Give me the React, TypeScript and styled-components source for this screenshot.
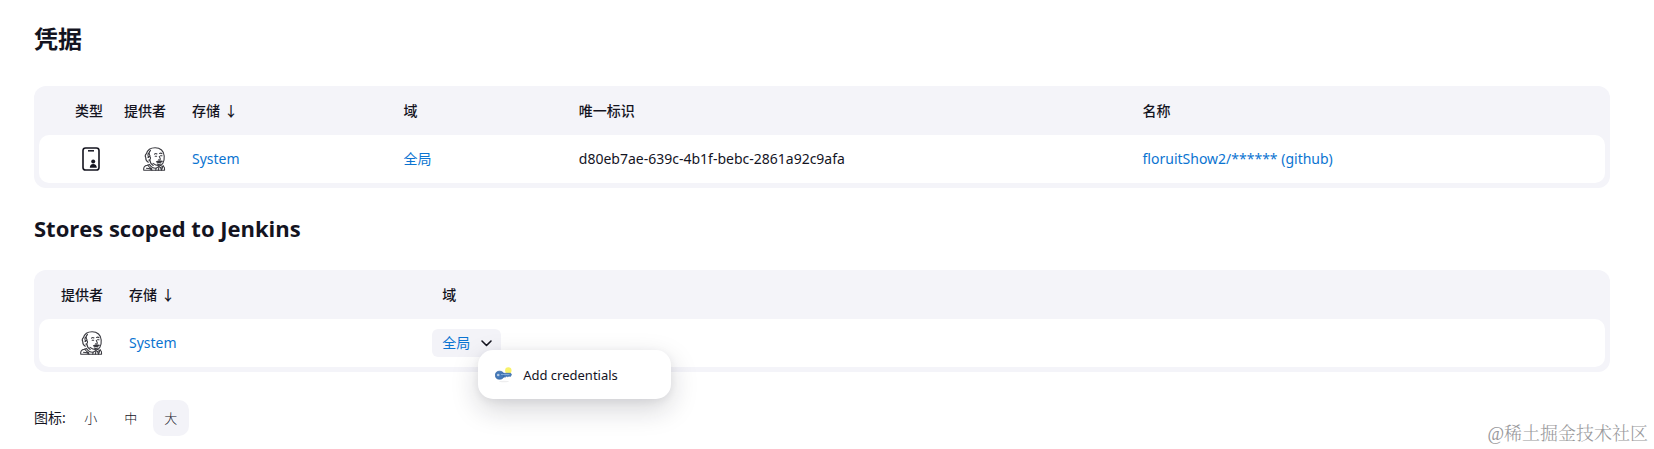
import React from "react";
import styled, { createGlobalStyle, css } from "styled-components";

const GlobalStyle = createGlobalStyle`
  *, *::before, *::after { box-sizing: border-box; }
  body {
    margin: 0;
    background: #fff;
    color: #14141f;
    font: 400 14px/20px "Noto Sans", "Noto Sans CJK SC", sans-serif;
  }
`;

const Page = styled.main`
  position: relative;
  padding: 21px 44px 13px 34px;
`;

const Title = styled.h1`
  margin: 0 0 29px;
  font-size: 24px;
  line-height: 36px;
  font-weight: 700;
`;

const SectionTitle = styled.h2`
  margin: 23px 0 25px;
  font-size: 22px;
  line-height: 34px;
  font-weight: 700;
  font-family: "Open Sans", "Noto Sans CJK SC", sans-serif;
`;

const Panel = styled.section`
  padding: 0 5px 5px;
  border-radius: 12px;
  background: #f4f4f9;
`;

const DataTable = styled.table`
  width: 100%;
  table-layout: fixed;
  border-collapse: separate;
  border-spacing: 0;
`;

const Col = styled.col<{ $width?: string }>`
  width: ${({ $width }) => $width ?? "auto"};
`;

const cell = css<{ $end?: boolean }>`
  padding: 0 12px 0 14px;
  text-align: ${({ $end }) => ($end ? "right" : "left")};
  white-space: nowrap;
`;

const HeadCell = styled.th<{ $end?: boolean }>`
  ${cell}
  padding-left: ${({ $end }) => ($end ? "0" : "14px")};
  height: 49px;
  font-weight: 500;
`;

const Cell = styled.td<{ $end?: boolean }>`
  ${cell}
  height: 48px;
  background: #fff;
  &:first-child { border-radius: 10px 0 0 10px; }
  &:last-child { border-radius: 0 10px 10px 0; }
  > svg { display: inline-block; vertical-align: middle; }
`;

const SortArrow = styled.span`
  margin-left: 4px;
`;

const Link = styled.a`
  color: #0b74d1;
  text-decoration: none;
`;

const DomainChip = styled.div`
  position: relative;
  display: inline-flex;
  align-items: center;
  gap: 8px;
  height: 28px;
  margin-left: -10px;
  padding: 0 7px 0 10px;
  border-radius: 6px;
  background: #f3f3f8;
`;

const ChevronButton = styled.button`
  display: flex;
  padding: 0;
  border: 0;
  background: none;
  color: #14141f;
`;

const Menu = styled.div`
  position: absolute;
  top: 21px;
  left: 46px;
  z-index: 1;
  width: 193px;
  padding: 5px;
  border-radius: 15px;
  background: #fff;
  box-shadow: 0 10px 28px rgba(20, 20, 40, 0.18), 0 2px 8px rgba(20, 20, 40, 0.06);
`;

const MenuItem = styled.button`
  display: flex;
  align-items: center;
  gap: 11px;
  width: 100%;
  height: 39px;
  padding: 0 12px;
  border: 0;
  background: none;
  color: #14141f;
  font: inherit;
  font-size: 13px;
`;

const SizeBar = styled.div`
  display: flex;
  align-items: center;
  gap: 4px;
  margin-top: 28px;
`;

const SizeLabel = styled.span`
  margin-right: 3px;
`;

const SizeButton = styled.button<{ $active?: boolean }>`
  width: 36px;
  height: 36px;
  padding: 0;
  border: 0;
  border-radius: 10px;
  background: ${({ $active }) => ($active ? "#f3f3f8" : "transparent")};
  color: inherit;
  font: inherit;
  font-size: 13px;
  font-weight: 300;
`;

const Watermark = styled.span`
  position: absolute;
  right: 6px;
  bottom: 2px;
  color: #98989b;
  font: 300 18px/26px "Liberation Serif", "Noto Serif CJK SC", "Noto Sans CJK SC", serif;
`;

const CredentialIcon = () => (
  <svg width="24" height="24" viewBox="0 0 24 24" fill="none" stroke="#14141f" strokeWidth="1.6">
    <rect x="4" y="1" width="16" height="22" rx="2.6" />
    <path d="M9 3.8h6" strokeWidth="1.5" />
    <circle cx="14.2" cy="14.5" r="2" fill="#14141f" stroke="none" />
    <path d="M10.800 20.800c0-2.300 1.300-3.700 3.400-3.700s3.600 1.400 3.600 3.700z" fill="#14141f" stroke="none" />
  </svg>
);

const JenkinsIcon = () => (
  <svg width="24" height="24" viewBox="0 0 24 24" fill="none" stroke="#3a3a40" strokeWidth="1.1" strokeLinecap="round" strokeLinejoin="round">
    <path d="M6.300 15.200C4.600 14.200 3.600 12.400 3.800 10.700c-.8-1.300-.5-3 .6-4C5.400 3 9 .7 13.100.7c5.200 0 8.900 3.400 9.100 8.300.2 2.700-.1 5.200-1.300 7.300-.8 1.500-2 2.400-3.600 2.400-2.200 0-4.700-.8-6.300-2.300" />
    <path d="M6.300 6.200c-.7 1.400-.5 2.900.2 4.200M8.500 3.500C6.900 4.900 7 7.200 8.100 9M6 10.300c1.100-1.200 2.900-.5 2.500 1.200-.2 1-.8 1.500-1.600 1.600M7.800 12.900c.2 2.500 1.300 4.300 3.400 5.600" />
    <path d="M12.500 7.200c.8-.8 1.600-.9 2.400-.2M17.600 6.500c.8-.6 1.700-.5 2.400.2M13.200 9.200h1.400M18.500 8.800h1.500M17.300 9.300c.2 1.600 1.700 2.500.8 3.300-.4.400-1 .4-1.600.2" />
    <path d="M14.500 14.700c1.200-.2 1.800-1 2.900-.6 1 0 2.100-.1 3 .1-1.400 1.300-4 1.800-5.900.5z" fill="#3a3a40" />
    <path d="M15.300 17c1 .6 2.500.6 3.500.1" />
    <path d="M1.700 23.200c-.3-2.700 1-4.600 3.600-4.900l2.200-.9c1.100 2.200 3.300 3.500 6.500 3.900l3-1.700 1.600 1 2.600-1.700c1.100.8 1.600 2.400 1.400 4.300z" />
    <path d="M14 21.300l-.2 1.900M17 19.600l-.6 3.600M18.600 20.600l.9 2.600M21.200 18.900l-1.700 4.100M4.500 21.200c2.300 0 4.300.5 5.500 2M5.800 18.300c1.100 1.600 2.400 2.700 4 3.500" />
  </svg>
);

const ChevronIcon = () => (
  <svg width="16" height="16" viewBox="0 0 16 16" fill="none" stroke="currentColor" strokeWidth="1.600" strokeLinecap="round" strokeLinejoin="round">
    <path d="M4 6l4.500 4.500L13 6" />
  </svg>
);

const KeyIcon = () => (
  <svg width="17" height="18" viewBox="0 0 17 18">
    <ellipse cx="9" cy="15.500" rx="5" ry=".8" fill="#eeeeef" />
    <circle cx="13.300" cy="4.400" r="3.200" fill="#f8f26a" />
    <path d="M7 7.300h8.700l.8 1.300-1 1.800-1.600-.3-1 .7-1.300-.6-1.200.9H7z" fill="#4c7fbd" stroke="#2f619f" strokeWidth=".6" />
    <ellipse cx="4.600" cy="9.200" rx="4.200" ry="4" fill="#4479b9" stroke="#2f619f" strokeWidth=".7" />
    <path d="M6 8.500h8.500" stroke="#8fb4de" strokeWidth=".8" />
    <circle cx="3.200" cy="9" r="1.300" fill="#b8cbe2" />
  </svg>
);

export default function App() {
  return (
    <>
      <GlobalStyle />
      <Page>
        <Title>凭据</Title>
        <Panel>
          <DataTable>
            <colgroup>
              <Col $width="76px" />
              <Col $width="63px" />
              <Col $width="13.5%" />
              <Col $width="11.2%" />
              <Col $width="36%" />
              <Col />
            </colgroup>
            <thead>
              <tr>
                <HeadCell $end>类型</HeadCell>
                <HeadCell $end>提供者</HeadCell>
                <HeadCell>存储<SortArrow>↓</SortArrow></HeadCell>
                <HeadCell>域</HeadCell>
                <HeadCell>唯一标识</HeadCell>
                <HeadCell>名称</HeadCell>
              </tr>
            </thead>
            <tbody>
              <tr>
                <Cell $end><CredentialIcon /></Cell>
                <Cell $end><JenkinsIcon /></Cell>
                <Cell><Link href="#system">System</Link></Cell>
                <Cell><Link href="#global">全局</Link></Cell>
                <Cell>d80eb7ae-639c-4b1f-bebc-2861a92c9afa</Cell>
                <Cell><Link href="#github">floruitShow2/****** (github)</Link></Cell>
              </tr>
            </tbody>
          </DataTable>
        </Panel>

        <SectionTitle>Stores scoped to Jenkins</SectionTitle>
        <Panel>
          <DataTable>
            <colgroup>
              <Col $width="76px" />
              <Col $width="20%" />
              <Col />
            </colgroup>
            <thead>
              <tr>
                <HeadCell $end>提供者</HeadCell>
                <HeadCell>存储<SortArrow>↓</SortArrow></HeadCell>
                <HeadCell>域</HeadCell>
              </tr>
            </thead>
            <tbody>
              <tr>
                <Cell $end><JenkinsIcon /></Cell>
                <Cell><Link href="#system-store">System</Link></Cell>
                <Cell>
                  <DomainChip>
                    <Link href="#global-domain">全局</Link>
                    <ChevronButton aria-label="全局" aria-expanded="true"><ChevronIcon /></ChevronButton>
                    <Menu>
                      <MenuItem><KeyIcon />Add credentials</MenuItem>
                    </Menu>
                  </DomainChip>
                </Cell>
              </tr>
            </tbody>
          </DataTable>
        </Panel>

        <SizeBar>
          <SizeLabel>图标:</SizeLabel>
          <SizeButton>小</SizeButton>
          <SizeButton>中</SizeButton>
          <SizeButton $active>大</SizeButton>
        </SizeBar>
        <Watermark>@稀土掘金技术社区</Watermark>
      </Page>
    </>
  );
}
